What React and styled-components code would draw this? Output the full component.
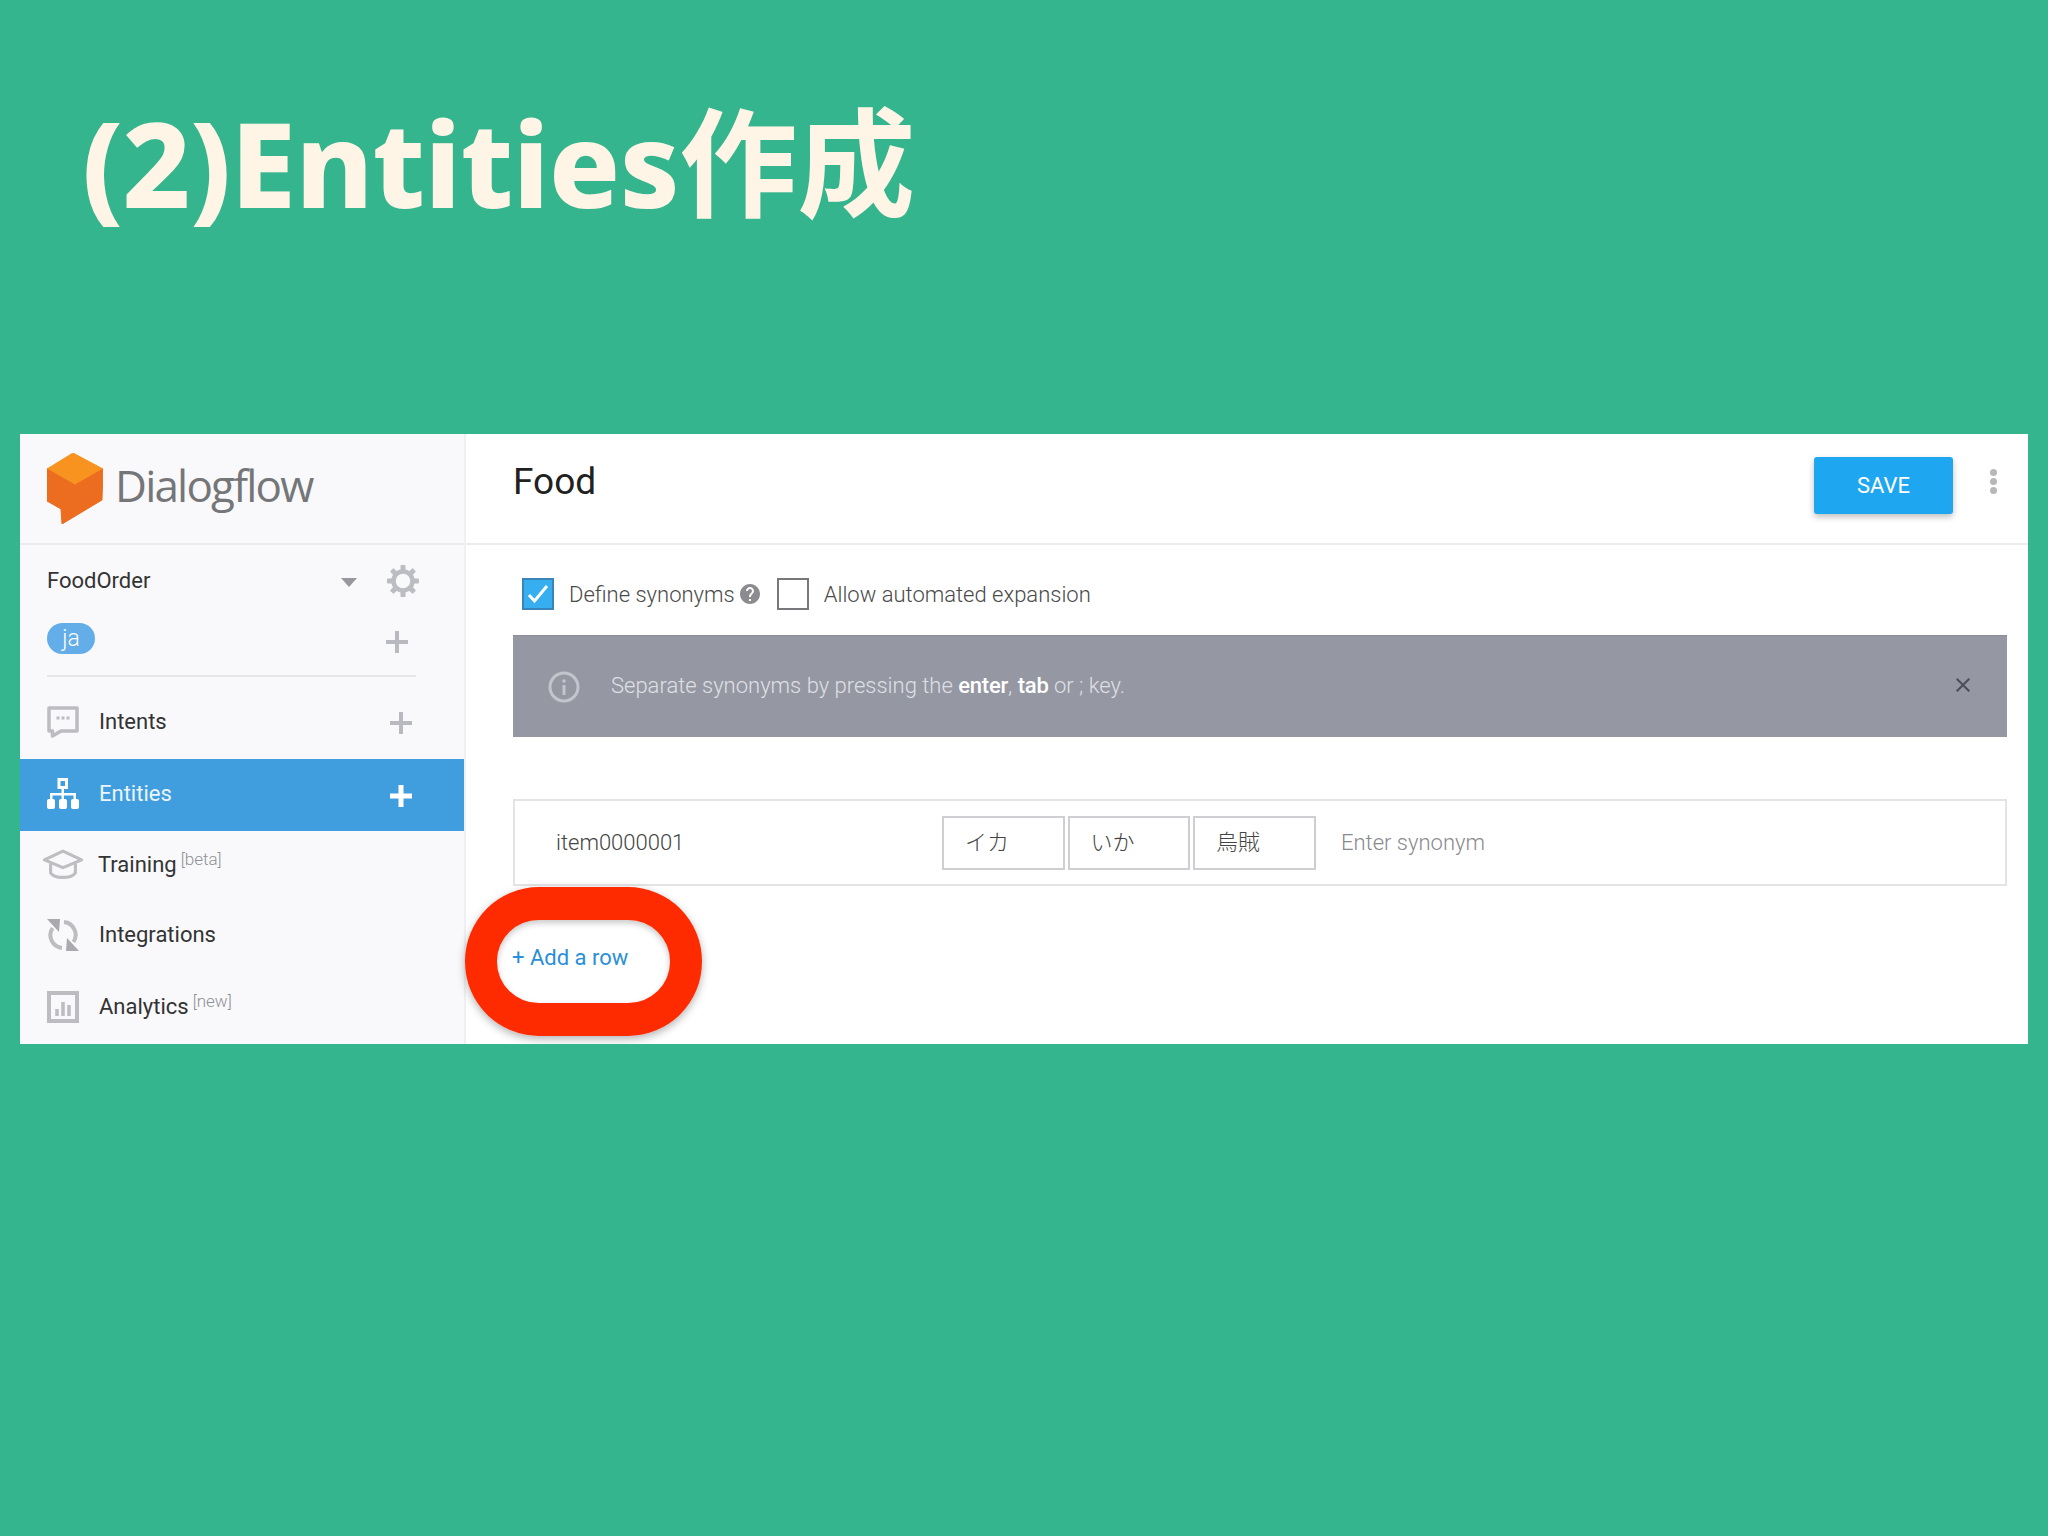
import React from 'react';
import styled, { createGlobalStyle } from 'styled-components';
import { MdHelp, MdClose } from 'react-icons/md';

const Global = createGlobalStyle`
  html, body { margin: 0; padding: 0; background: #34b58d; }
  body { width: 2048px; height: 1536px; overflow: hidden; font-family: Roboto, "Noto Sans CJK JP", sans-serif; }
`;

const Page = styled.div`
  width: 2048px;
  height: 1536px;
  background: #34b58d;
  display: flex;
  flex-direction: column;
`;
const TitleBar = styled.header`
  height: 434px;
  box-sizing: border-box;
  padding: 72px 0 0 82px;
`;
const Title = styled.h1`
  margin: 0;
  font-family: "Noto Sans", "Noto Sans CJK JP", sans-serif;
  font-weight: 800;
  font-size: 118px;
  line-height: 170px;
  letter-spacing: -0.6px;
  font-variant-ligatures: none;
  color: #fff5e6;
`;
const TitleCjk = styled.span`
  font-family: "Noto Sans CJK JP", sans-serif;
  font-weight: 700;
  letter-spacing: 0;
`;
const Panel = styled.section`
  position: relative;
  margin-left: 20px;
  width: 2008px;
  height: 610px;
  display: grid;
  grid-template-columns: 446px 1fr;
  background: #fff;
  overflow: hidden;
`;
const Sidebar = styled.aside`
  background: #f9f9fb;
  border-right: 2px solid #f0f0f2;
  display: flex;
  flex-direction: column;
`;
const Brand = styled.div`
  height: 111px;
  box-sizing: border-box;
  border-bottom: 2px solid #ececee;
  display: flex;
  align-items: center;
  padding: 0 0 0 27px;
  gap: 12px;
`;
const BrandName = styled.span`
  font-family: "Open Sans", sans-serif;
  font-size: 44px;
  letter-spacing: -1.8px;
  color: #757678;
  margin-top: -7px;
`;
const Project = styled.div`
  margin: 0 48px 0 27px;
  height: 132px;
  box-sizing: border-box;
  border-bottom: 2px solid #e6e6e8;
  display: grid;
  grid-template-columns: 1fr 44px;
  grid-template-rows: 71px 48px;
  align-items: center;
`;
const ProjectName = styled.div`
  display: flex;
  align-items: center;
  justify-content: space-between;
  padding-right: 15px;
  font-size: 22px;
  color: #333;
`;
const Caret = styled.i`
  width: 0;
  height: 0;
  border-left: 8px solid transparent;
  border-right: 8px solid transparent;
  border-top: 9px solid #97979d;
  margin-top: 3px;
`;
const GearSlot = styled.span`
  display: flex;
  justify-content: flex-end;
  margin-right: -3px;
`;
const ProjectAdd = styled.span`
  display: flex;
  justify-content: flex-end;
  margin: 4px 8px 0 0;
`;
const LangChip = styled.span`
  width: 48px;
  height: 31px;
  border-radius: 16px;
  background: #63ade8;
  color: #fff;
  font-size: 23px;
  font-weight: 300;
  display: flex;
  align-items: center;
  justify-content: center;
  margin-top: -4px;
`;
const NavList = styled.nav`
  margin-top: 10px;
  display: flex;
  flex-direction: column;
`;
const NavRow = styled.a`
  height: ${p => p.$h}px;
  box-sizing: border-box;
  display: flex;
  align-items: center;
  padding: 0 52px 3px 27px;
  background: ${p => (p.$active ? '#409ede' : 'transparent')};
  color: ${p => (p.$active ? '#eaf5fd' : '#333')};
  font-size: 22px;
`;
const IconSlot = styled.span`
  width: 52px;
  display: flex;
  align-items: center;
  margin-right: ${p => p.$mr ?? 0}px;
  margin-left: ${p => p.$ml ?? 0}px;
`;
const NavLabel = styled.span`
  flex: 1;
`;
const NavAdd = styled.span`
  display: flex;
  margin-top: ${p => p.$mt}px;
`;
const Tag = styled.sup`
  font-size: 17px;
  font-weight: 300;
  color: #8f9095;
  margin-left: 4px;
  line-height: 0;
  position: relative;
  top: 1px;
  vertical-align: 8px;
`;
const Main = styled.main`
  display: flex;
  flex-direction: column;
  min-width: 0;
`;
const MainHeader = styled.div`
  height: 111px;
  box-sizing: border-box;
  border-bottom: 2px solid #ececee;
  display: flex;
  align-items: flex-start;
  padding: 23px 31px 0 47px;
`;
const PageName = styled.h2`
  margin: 3px 0 0;
  font-size: 37px;
  font-weight: 400;
  line-height: 44px;
  color: #212121;
  flex: 1;
`;
const SaveButton = styled.button`
  width: 139px;
  height: 57px;
  border: none;
  border-radius: 3px;
  margin-right: 37px;
  background: #1ea7f0;
  color: #fff;
  font: 400 22px Roboto, sans-serif;
  box-shadow: 0 3px 6px rgba(0, 0, 0, 0.25);
`;
const Dots = styled.div`
  margin-top: 12px;
  display: flex;
  flex-direction: column;
  gap: 2px;
`;
const Dot = styled.i`
  width: 7px;
  height: 7px;
  border-radius: 50%;
  background: #b8b8bb;
`;
const Body = styled.div`
  padding: 33px 21px 0 47px;
  display: flex;
  flex-direction: column;
`;
const Options = styled.div`
  display: flex;
  align-items: center;
  height: 32px;
  padding-left: 9px;
  font-size: 22px;
  font-weight: 300;
  color: #4a4a4a;
`;
const Check = styled.span`
  width: 32px;
  height: 32px;
  box-sizing: border-box;
  border: 2px solid ${p => (p.$on ? '#3a84b8' : '#77777c')};
  background: ${p => (p.$on ? '#36aef0' : '#fff')};
  display: flex;
  align-items: center;
  justify-content: center;
  margin-right: 15px;
  margin-left: ${p => p.$ml ?? 0}px;
`;
const Help = styled(MdHelp)`
  width: 24px;
  height: 24px;
  color: #8c8c90;
  margin-left: 3px;
`;
const Banner = styled.div`
  margin-top: 25px;
  height: 102px;
  background: #9597a3;
  border-top: 1px solid #8a8c98;
  box-sizing: border-box;
  display: flex;
  align-items: center;
  padding: 0 32px 0 35px;
  font-size: 22px;
  font-weight: 300;
  color: #dfe0e5;
`;
const BannerText = styled.span`
  flex: 1;
  margin-left: 31px;
  margin-top: -2px;
  b { font-weight: 500; color: #fff; letter-spacing: -0.2px; }
`;
const CloseIcon = styled(MdClose)`
  width: 24px;
  height: 24px;
  color: #4b4d5c;
  margin-top: -4px;
`;
const EntityRow = styled.div`
  margin-top: 62px;
  height: 87px;
  box-sizing: border-box;
  border: 2px solid #e4e4e7;
  display: flex;
  align-items: center;
  font-size: 22px;
  font-weight: 300;
  color: #444;
`;
const RefValue = styled.span`
  width: 427px;
  padding-left: 41px;
  box-sizing: border-box;
`;
const Synonyms = styled.div`
  display: flex;
  gap: 3px;
  align-items: center;
`;
const Synonym = styled.span`
  width: 122.500px;
  height: 54px;
  box-sizing: border-box;
  border: 2px solid #cfcfd3;
  padding: 0 0 6px 21px;
  display: flex;
  align-items: center;
  font-family: "Noto Sans CJK JP", sans-serif;
  font-weight: 300;
  font-size: 22px;
`;
const Placeholder = styled.span`
  margin-left: 25.500px;
  color: #8a8a8e;
`;
const AddRow = styled.a`
  margin: 58px 0 0 -1px;
  font-size: 22px;
  line-height: 28px;
  color: #2a8fd8;
`;
const Ring = styled.div`
  position: absolute;
  left: 445px;
  top: 453px;
  width: 237px;
  height: 149px;
  box-sizing: border-box;
  border: solid #fe2a00;
  border-width: 33px 32px;
  border-radius: 74px;
  box-shadow: 0 3px 8px rgba(0, 0, 0, 0.3), inset 0 3px 6px rgba(0, 0, 0, 0.22);
  pointer-events: none;
`;

const Logo = () => (
  <svg width="56" height="71" viewBox="47 452 56 71">
    <path d="M73 452 L103 468 L75 484 L47 468 Z" fill="#f7931e" strokeLinejoin="round" stroke="#f7931e" strokeWidth="1" />
    <path d="M47 468 L75 484 L103 468 L102 499 L62 523 L61 508 L47 500 Z" fill="#ec6d1f" strokeLinejoin="round" stroke="#ec6d1f" strokeWidth="1" />
  </svg>
);
const Plus = ({ color = '#b9bac0', size = 22, sw = 4 }) => (
  <svg width={size} height={size} viewBox="0 0 22 22">
    <path d="M11 0V22M0 11H22" stroke={color} strokeWidth={sw} fill="none" />
  </svg>
);
const Gear = () => (
  <svg width="32" height="32" viewBox="0 0 32 32" fill="#bcbdc3">
    <circle cx="16" cy="16" r="9.500" fill="none" stroke="#bcbdc3" strokeWidth="4.500" />
    {[0, 45, 90, 135, 180, 225, 270, 315].map(a => (
      <rect key={a} x="13.500" y="0" width="5" height="8" rx="1" transform={`rotate(${a} 16 16)`} />
    ))}
  </svg>
);
const IntentsIcon = () => (
  <svg width="32" height="32" viewBox="0 0 32 32" fill="none">
    <path d="M2 2H30V25H14L5.500 30V25H2Z" stroke="#bcbcc1" strokeWidth="3.500" strokeLinejoin="round" />
    <path d="M9.500 12H12.500M14.500 12H17.500M19.500 12H22.500" stroke="#bcbcc1" strokeWidth="3" />
  </svg>
);
const EntitiesIcon = () => (
  <svg width="32" height="32" viewBox="0 0 32 32" fill="#fff">
    <path fillRule="evenodd" d="M10.500 0H21V11H10.500ZM13.500 3V8H18V3Z" />
    <path d="M14.500 10H17V15H29V22H26.500V17.500H17V22H14.500V17.500H5.500V22H3V15H14.500Z" />
    <rect x="0" y="21" width="8" height="10" rx="2" />
    <rect x="12" y="21" width="8" height="10" rx="2" />
    <rect x="24" y="21" width="8" height="10" rx="2" />
  </svg>
);
const TrainingIcon = () => (
  <svg width="44" height="31" viewBox="0 0 42 30" fill="none" stroke="#bdbdc2" strokeWidth="3">
    <path d="M21 2 L39 10.500 L21 18 L3 10.500 Z" strokeLinejoin="round" />
    <path d="M9 14V23C13 29 29 29 33 23V14" />
  </svg>
);
const IntegrationsIcon = () => (
  <svg width="32" height="32" viewBox="0 0 32 32" fill="none">
    <path d="M5.500 9A13 13 0 0 0 15 29" stroke="#bcbcc1" strokeWidth="4" />
    <path d="M17 3A13 13 0 0 1 26.500 23" stroke="#bcbcc1" strokeWidth="4" />
    <path d="M0 0H13L12 13Z" fill="#a9a9ae" />
    <path d="M32 32H19L20 19Z" fill="#a9a9ae" />
  </svg>
);
const AnalyticsIcon = () => (
  <svg width="32" height="32" viewBox="0 0 32 32" fill="none">
    <rect x="2" y="2" width="28" height="28" stroke="#bcbcc1" strokeWidth="4" />
    <path d="M10 18V25M16 11V25M22 14V25" stroke="#bcbcc1" strokeWidth="3.500" />
  </svg>
);
const InfoIcon = () => (
  <svg width="32" height="32" viewBox="0 0 32 32" fill="none">
    <circle cx="16" cy="16" r="14" stroke="#c4c5cc" strokeWidth="3" />
    <rect x="14.500" y="14" width="3" height="10" fill="#c4c5cc" />
    <circle cx="16" cy="10" r="1.800" fill="#c4c5cc" />
  </svg>
);
const Tick = () => (
  <svg width="22" height="20" viewBox="0 0 22 20" fill="none">
    <path d="M2 11L7.500 17L20 2" stroke="#fff" strokeWidth="3" />
  </svg>
);

export default function App() {
  return (
    <Page>
      <Global />
      <TitleBar>
        <Title>(2)Entities<TitleCjk>作成</TitleCjk></Title>
      </TitleBar>
      <Panel>
        <Sidebar>
          <Brand>
            <Logo />
            <BrandName>Dialogflow</BrandName>
          </Brand>
          <Project>
            <ProjectName>FoodOrder<Caret /></ProjectName>
            <GearSlot><Gear /></GearSlot>
            <LangChip>ja</LangChip>
            <ProjectAdd><Plus /></ProjectAdd>
          </Project>
          <NavList>
            <NavRow $h={72}>
              <IconSlot><IntentsIcon /></IconSlot>
              <NavLabel>Intents</NavLabel>
              <NavAdd $mt={2}><Plus /></NavAdd>
            </NavRow>
            <NavRow $h={72} $active>
              <IconSlot><EntitiesIcon /></IconSlot>
              <NavLabel>Entities</NavLabel>
              <NavAdd $mt={4}><Plus color="#fff" sw={5} /></NavAdd>
            </NavRow>
            <NavRow $h={70}>
              <IconSlot $ml={-6} $mr={5}><TrainingIcon /></IconSlot>
              <NavLabel>Training<Tag>[beta]</Tag></NavLabel>
            </NavRow>
            <NavRow $h={70}>
              <IconSlot><IntegrationsIcon /></IconSlot>
              <NavLabel>Integrations</NavLabel>
            </NavRow>
            <NavRow $h={74}>
              <IconSlot><AnalyticsIcon /></IconSlot>
              <NavLabel>Analytics<Tag>[new]</Tag></NavLabel>
            </NavRow>
          </NavList>
        </Sidebar>
        <Main>
          <MainHeader>
            <PageName>Food</PageName>
            <SaveButton>SAVE</SaveButton>
            <Dots><Dot /><Dot /><Dot /></Dots>
          </MainHeader>
          <Body>
            <Options>
              <Check $on><Tick /></Check>
              Define synonyms
              <Help />
              <Check $ml={15} />
              Allow automated expansion
            </Options>
            <Banner>
              <InfoIcon />
              <BannerText>Separate synonyms by pressing the <b>enter</b>, <b>tab</b> or ; key.</BannerText>
              <CloseIcon />
            </Banner>
            <EntityRow>
              <RefValue>item0000001</RefValue>
              <Synonyms>
                <Synonym>イカ</Synonym>
                <Synonym>いか</Synonym>
                <Synonym>烏賊</Synonym>
              </Synonyms>
              <Placeholder>Enter synonym</Placeholder>
            </EntityRow>
            <AddRow>+ Add a row</AddRow>
          </Body>
        </Main>
        <Ring />
      </Panel>
    </Page>
  );
}
